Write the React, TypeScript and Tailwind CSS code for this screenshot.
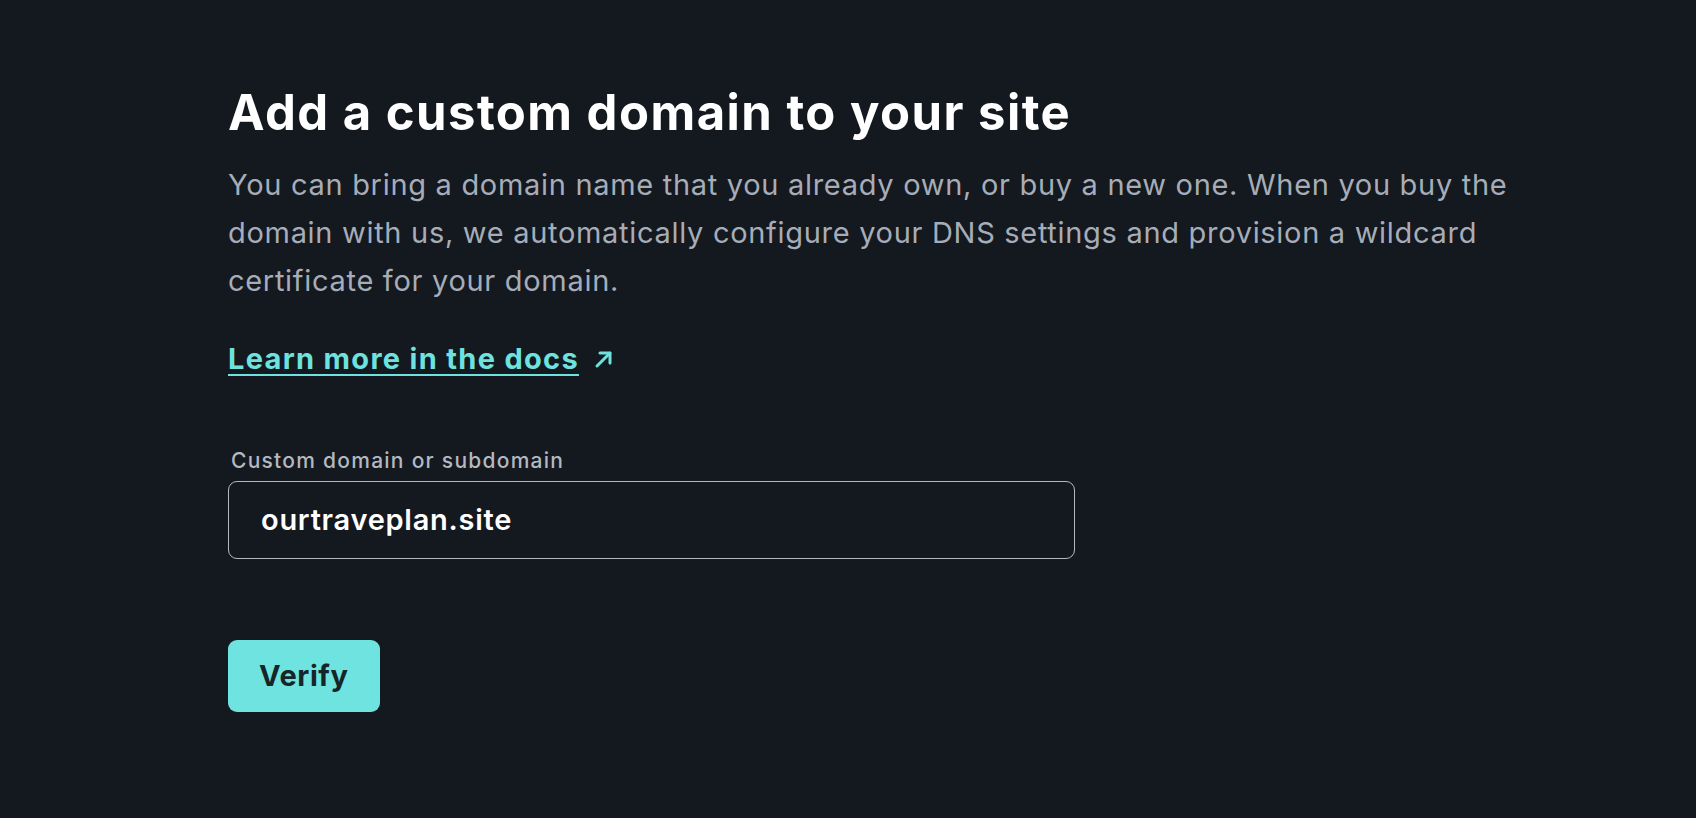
import React from "react";

export default function App() {
  return (
    <div className="min-h-[818px] w-full bg-[#14181f] text-white" style={{ fontFamily: "Inter, 'Noto Sans', sans-serif" }}>
      <div className="pl-[228px] pt-[84px] flex flex-col items-start">
        <h1 className="text-[49px] leading-[58px] font-bold tracking-[0.03em] text-white">
          Add a custom domain to your site
        </h1>
        <p className="mt-[19px] w-[1300px] text-[29px] leading-[48px] tracking-[0.024em] text-[#a6adb8]">
          You can bring a domain name that you already own, or buy a new one. When you buy the domain with us, we automatically configure your DNS settings and provision a wildcard certificate for your domain.
        </p>
        <a
          href="#"
          className="mt-[30px] flex items-center gap-[13px] text-[29px] leading-[48px] font-bold tracking-[0.045em] text-[#6ee2df]"
        >
          <span className="underline decoration-2 underline-offset-[5px]">Learn more in the docs</span>
          <svg width="24" height="24" viewBox="0 0 24 24" fill="none" stroke="currentColor" strokeWidth="3" strokeLinecap="round" strokeLinejoin="round">
            <path d="M5 19 L18 6" />
            <path d="M8 6 H18 V16" />
          </svg>
        </a>
        <label className="mt-[64px] ml-[3px] text-[21px] leading-[28px] font-medium tracking-[0.06em] text-[#b3b8c1]">
          Custom domain or subdomain
        </label>
        <div className="mt-[6px] w-[847px] h-[78px] rounded-[9px] border-[1.5px] border-[#b4b9c1] flex items-center px-[32px]">
          <span className="text-[29px] font-semibold tracking-[0.025em] text-white">ourtraveplan.site</span>
        </div>
        <button className="mt-[81px] h-[72px] px-[31px] rounded-[9px] bg-[#6ee3df] text-[29px] font-bold tracking-[0.02em] text-[#152528]">
          Verify
        </button>
      </div>
    </div>
  );
}
